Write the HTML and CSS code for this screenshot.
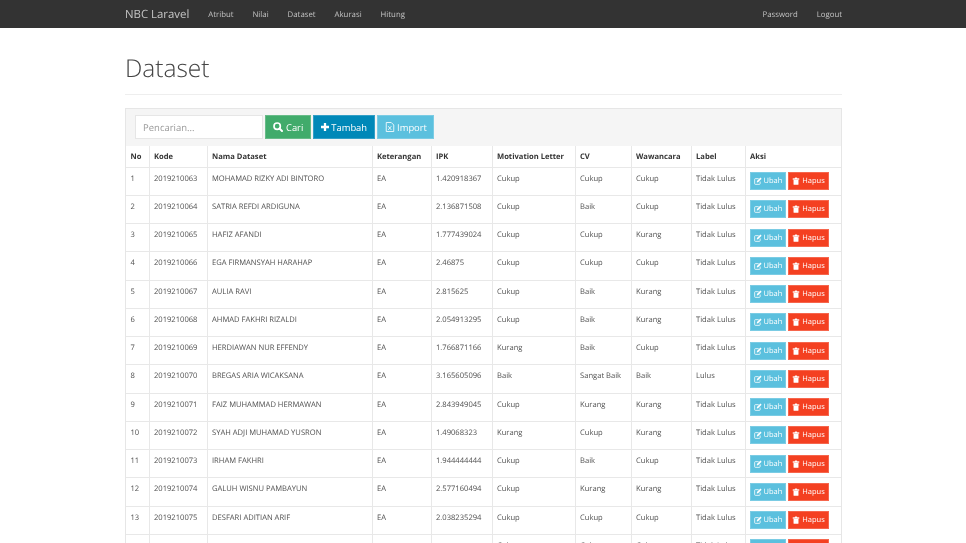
FILE: index.html
```html
<!DOCTYPE html>
<html lang="en">
<head>
<meta charset="utf-8">
<title>Dataset</title>
<link rel="stylesheet" href="styles.css">
</head>
<body>
	<svg class="sprites">
		<symbol id="i-edit" viewBox="0 0 12 12"><path d="M9.200 6.800V10a1 1 0 0 1-1 1H2a1 1 0 0 1-1-1V3.500a1 1 0 0 1 1-1h5" fill="none" stroke="#fff" stroke-width="1.200"/><path d="M4.400 6L9.700 .9l1.700 1.700-5.200 5.200-2 .3z" fill="#fff"/></symbol>
		<symbol id="i-trash" viewBox="0 0 12 12"><path d="M1.300 2.400h9.400v1.300H1.300zM4.200 2.400l.5-1.400h2.600l.5 1.400" fill="#fff" stroke="#fff" stroke-width=".5"/><path d="M2.300 4.300h7.400V11a.8.8 0 0 1-.8.800H3.100a.8.8 0 0 1-.8-.8z" fill="#fff"/></symbol>
	</svg>
	<nav class="navbar">
		<div class="container nav-inner">
			<a class="brand" href="#">NBC Laravel</a>
			<ul class="nav-links">
				<li><a href="#">Atribut</a></li>
				<li><a href="#">Nilai</a></li>
				<li><a href="#">Dataset</a></li>
				<li><a href="#">Akurasi</a></li>
				<li><a href="#">Hitung</a></li>
			</ul>
			<ul class="nav-links nav-right">
				<li><a href="#">Password</a></li>
				<li><a href="#">Logout</a></li>
			</ul>
		</div>
	</nav>
	<div class="container">
		<div class="page-header"><h1>Dataset</h1></div>
		<div class="panel">
			<form class="toolbar">
				<input class="search" type="text" placeholder="Pencarian...">
				<button class="btn btn-green" type="button"><svg class="icon" viewBox="0 0 12 12"><circle cx="5" cy="5" r="3.800" fill="none" stroke="#fff" stroke-width="2"/><path d="M7.800 7.800l3 3" stroke="#fff" stroke-width="2.400" stroke-linecap="round"/></svg>Cari</button>
				<button class="btn btn-blue" type="button"><svg class="icon icon-plus" viewBox="0 0 12 12"><path d="M6 0v12M0 6h12" stroke="#fff" stroke-width="3.400"/></svg>Tambah</button>
				<button class="btn btn-import" type="button"><svg class="icon" viewBox="0 0 12 12"><path d="M1.500.6h6l3 3v7.800h-9z" fill="none" stroke="#fff"/><path d="M3.800 5l3.800 4.500M7.600 5L3.800 9.500" stroke="#fff"/></svg>Import</button>
			</form>
			<table class="data-table">
				<thead>
					<tr>
						<th class="c-no">No</th><th class="c-kode">Kode</th><th class="c-nama">Nama Dataset</th><th class="c-ket">Keterangan</th><th class="c-ipk">IPK</th><th class="c-ml">Motivation Letter</th><th class="c-cv">CV</th><th class="c-waw">Wawancara</th><th class="c-label">Label</th><th>Aksi</th>
					</tr>
				</thead>
				<tbody>
					<tr><td>1</td><td>2019210063</td><td>MOHAMAD RIZKY ADI BINTORO</td><td>EA</td><td>1.420918367</td><td>Cukup</td><td>Cukup</td><td>Cukup</td><td>Tidak Lulus</td><td class="actions"><div class="actions-row"><a class="btn btn-sm btn-cyan" href="#"><svg class="icon"><use href="#i-edit"/></svg>Ubah</a><a class="btn btn-sm btn-red" href="#"><svg class="icon"><use href="#i-trash"/></svg>Hapus</a></div></td></tr>
					<tr><td>2</td><td>2019210064</td><td>SATRIA REFDI ARDIGUNA</td><td>EA</td><td>2.136871508</td><td>Cukup</td><td>Baik</td><td>Cukup</td><td>Tidak Lulus</td><td class="actions"><div class="actions-row"><a class="btn btn-sm btn-cyan" href="#"><svg class="icon"><use href="#i-edit"/></svg>Ubah</a><a class="btn btn-sm btn-red" href="#"><svg class="icon"><use href="#i-trash"/></svg>Hapus</a></div></td></tr>
					<tr><td>3</td><td>2019210065</td><td>HAFIZ AFANDI</td><td>EA</td><td>1.777439024</td><td>Cukup</td><td>Cukup</td><td>Kurang</td><td>Tidak Lulus</td><td class="actions"><div class="actions-row"><a class="btn btn-sm btn-cyan" href="#"><svg class="icon"><use href="#i-edit"/></svg>Ubah</a><a class="btn btn-sm btn-red" href="#"><svg class="icon"><use href="#i-trash"/></svg>Hapus</a></div></td></tr>
					<tr><td>4</td><td>2019210066</td><td>EGA FIRMANSYAH HARAHAP</td><td>EA</td><td>2.46875</td><td>Cukup</td><td>Cukup</td><td>Cukup</td><td>Tidak Lulus</td><td class="actions"><div class="actions-row"><a class="btn btn-sm btn-cyan" href="#"><svg class="icon"><use href="#i-edit"/></svg>Ubah</a><a class="btn btn-sm btn-red" href="#"><svg class="icon"><use href="#i-trash"/></svg>Hapus</a></div></td></tr>
					<tr><td>5</td><td>2019210067</td><td>AULIA RAVI</td><td>EA</td><td>2.815625</td><td>Cukup</td><td>Baik</td><td>Kurang</td><td>Tidak Lulus</td><td class="actions"><div class="actions-row"><a class="btn btn-sm btn-cyan" href="#"><svg class="icon"><use href="#i-edit"/></svg>Ubah</a><a class="btn btn-sm btn-red" href="#"><svg class="icon"><use href="#i-trash"/></svg>Hapus</a></div></td></tr>
					<tr><td>6</td><td>2019210068</td><td>AHMAD FAKHRI RIZALDI</td><td>EA</td><td>2.054913295</td><td>Cukup</td><td>Baik</td><td>Kurang</td><td>Tidak Lulus</td><td class="actions"><div class="actions-row"><a class="btn btn-sm btn-cyan" href="#"><svg class="icon"><use href="#i-edit"/></svg>Ubah</a><a class="btn btn-sm btn-red" href="#"><svg class="icon"><use href="#i-trash"/></svg>Hapus</a></div></td></tr>
					<tr><td>7</td><td>2019210069</td><td>HERDIAWAN NUR EFFENDY</td><td>EA</td><td>1.766871166</td><td>Kurang</td><td>Baik</td><td>Cukup</td><td>Tidak Lulus</td><td class="actions"><div class="actions-row"><a class="btn btn-sm btn-cyan" href="#"><svg class="icon"><use href="#i-edit"/></svg>Ubah</a><a class="btn btn-sm btn-red" href="#"><svg class="icon"><use href="#i-trash"/></svg>Hapus</a></div></td></tr>
					<tr><td>8</td><td>2019210070</td><td>BREGAS ARIA WICAKSANA</td><td>EA</td><td>3.165605096</td><td>Baik</td><td>Sangat Baik</td><td>Baik</td><td>Lulus</td><td class="actions"><div class="actions-row"><a class="btn btn-sm btn-cyan" href="#"><svg class="icon"><use href="#i-edit"/></svg>Ubah</a><a class="btn btn-sm btn-red" href="#"><svg class="icon"><use href="#i-trash"/></svg>Hapus</a></div></td></tr>
					<tr><td>9</td><td>2019210071</td><td>FAIZ MUHAMMAD HERMAWAN</td><td>EA</td><td>2.843949045</td><td>Cukup</td><td>Kurang</td><td>Kurang</td><td>Tidak Lulus</td><td class="actions"><div class="actions-row"><a class="btn btn-sm btn-cyan" href="#"><svg class="icon"><use href="#i-edit"/></svg>Ubah</a><a class="btn btn-sm btn-red" href="#"><svg class="icon"><use href="#i-trash"/></svg>Hapus</a></div></td></tr>
					<tr><td>10</td><td>2019210072</td><td>SYAH ADJI MUHAMAD YUSRON</td><td>EA</td><td>1.49068323</td><td>Kurang</td><td>Cukup</td><td>Kurang</td><td>Tidak Lulus</td><td class="actions"><div class="actions-row"><a class="btn btn-sm btn-cyan" href="#"><svg class="icon"><use href="#i-edit"/></svg>Ubah</a><a class="btn btn-sm btn-red" href="#"><svg class="icon"><use href="#i-trash"/></svg>Hapus</a></div></td></tr>
					<tr><td>11</td><td>2019210073</td><td>IRHAM FAKHRI</td><td>EA</td><td>1.944444444</td><td>Cukup</td><td>Baik</td><td>Cukup</td><td>Tidak Lulus</td><td class="actions"><div class="actions-row"><a class="btn btn-sm btn-cyan" href="#"><svg class="icon"><use href="#i-edit"/></svg>Ubah</a><a class="btn btn-sm btn-red" href="#"><svg class="icon"><use href="#i-trash"/></svg>Hapus</a></div></td></tr>
					<tr><td>12</td><td>2019210074</td><td>GALUH WISNU PAMBAYUN</td><td>EA</td><td>2.577160494</td><td>Cukup</td><td>Kurang</td><td>Kurang</td><td>Tidak Lulus</td><td class="actions"><div class="actions-row"><a class="btn btn-sm btn-cyan" href="#"><svg class="icon"><use href="#i-edit"/></svg>Ubah</a><a class="btn btn-sm btn-red" href="#"><svg class="icon"><use href="#i-trash"/></svg>Hapus</a></div></td></tr>
					<tr><td>13</td><td>2019210075</td><td>DESFARI ADITIAN ARIF</td><td>EA</td><td>2.038235294</td><td>Cukup</td><td>Cukup</td><td>Cukup</td><td>Tidak Lulus</td><td class="actions"><div class="actions-row"><a class="btn btn-sm btn-cyan" href="#"><svg class="icon"><use href="#i-edit"/></svg>Ubah</a><a class="btn btn-sm btn-red" href="#"><svg class="icon"><use href="#i-trash"/></svg>Hapus</a></div></td></tr>
					<tr><td></td><td></td><td></td><td></td><td></td><td>Cukup</td><td>Cukup</td><td>Cukup</td><td>Tidak Lulus</td><td class="actions"><div class="actions-row"><a class="btn btn-sm btn-cyan" href="#"><svg class="icon"><use href="#i-edit"/></svg>Ubah</a><a class="btn btn-sm btn-red" href="#"><svg class="icon"><use href="#i-trash"/></svg>Hapus</a></div></td></tr>
				</tbody>
			</table>
		</div>
	</div>
</body>
</html>
```

FILE: styles.css
```css
* {
	box-sizing: border-box;
}

html, body {
	height: 543px;
	overflow: hidden;
}

body {
	margin: 0;
	font-family: "Open Sans", sans-serif;
	font-size: 7.600px;
	color: #505050;
	background: #fff;
	text-rendering: geometricPrecision;
}

a {
	text-decoration: none;
}

.sprites {
	display: none;
}

.container {
	width: 717px;
	margin: 0 auto;
	will-change: transform;
}

.navbar {
	height: 28px;
	background: #333;
}

.nav-inner {
	display: flex;
	align-items: center;
	height: 28px;
	padding-top: 1px;
}

.brand {
	font-size: 11.400px;
	color: #c4c4c4;
	margin-right: 19px;
}

.nav-links {
	display: flex;
	gap: 19px;
	margin: 0;
	padding: 0;
	list-style: none;
	font-size: 7.800px;
}

.nav-links a {
	color: #c4c4c4;
}

.nav-right {
	margin-left: auto;
}

.page-header {
	height: 67px;
	border-bottom: 1px solid #eee;
}

.page-header h1 {
	margin: 0;
	padding-top: 23px;
	font-size: 24.500px;
	line-height: 35px;
	font-weight: 300;
	color: #444;
}

.panel {
	margin-top: 13px;
	border: 1px solid #e6e6e6;
	border-bottom: 0;
}

.toolbar {
	display: flex;
	gap: 2px;
	height: 37px;
	padding: 6px 9px 0;
	background: #f5f5f5;
}

.search {
	width: 128px;
	height: 24px;
	padding: 0 7px;
	border: 1px solid #e6e6e6;
	font: 9.500px "Open Sans", sans-serif;
	text-rendering: geometricPrecision;
	background: #fff;
}

.search::placeholder {
	color: #999;
}

.btn {
	display: flex;
	align-items: center;
	gap: 3px;
	height: 24px;
	padding: 0 7px;
	border: 1px solid rgba(255, 255, 255, .2);
	color: #fff;
	font: 9.400px "Open Sans", sans-serif;
	text-rendering: geometricPrecision;
}

.btn-green {background: #41ab6b;}
.btn-blue {background: #0088b8;}
.btn-cyan {background: #5bc0de;}
.btn-red {background: #f44021;}

.btn-import {
	gap: 2px;
	padding-right: 6px;
	background: #5bc0de;
}

.icon {
	width: 10px;
	height: 10px;
}

.btn-blue {
	gap: 2px;
}

.btn .icon-plus {
	width: 8px;
	height: 8px;
}

.data-table {
	width: 100%;
	border-collapse: collapse;
	table-layout: fixed;
}

.data-table th, .data-table td {
	padding: 6px 5px 3px 4.500px;
	border: 1px solid #e8e8e8;
	text-align: left;
	vertical-align: top;
	line-height: 11px;
	white-space: nowrap;
}

.data-table tr > :first-child {border-left: 0;}
.data-table tr > :last-child {border-right: 0;}

.data-table th {
	height: 21px;
	font-weight: 700;
	color: #333;
	border-top: 0;
}

.data-table td {
	height: 28.250px;
}

.data-table td.actions {
	padding: 4.500px 5px 0 4px;
}

.actions-row {
	display: flex;
	gap: 2px;
}

.btn-sm {
	height: 18px;
	padding: 0 3px;
	font-size: 7.500px;
	gap: 2px;
}

.btn-sm .icon {
	width: 8px;
	height: 8px;
}

.c-no {width: 23px;}
.c-kode {width: 58px;}
.c-nama {width: 165px;}
.c-ket {width: 59px;}
.c-ipk {width: 61px;}
.c-ml {width: 83px;}
.c-cv {width: 56px;}
.c-waw {width: 60px;}
.c-label {width: 54px;}
```
